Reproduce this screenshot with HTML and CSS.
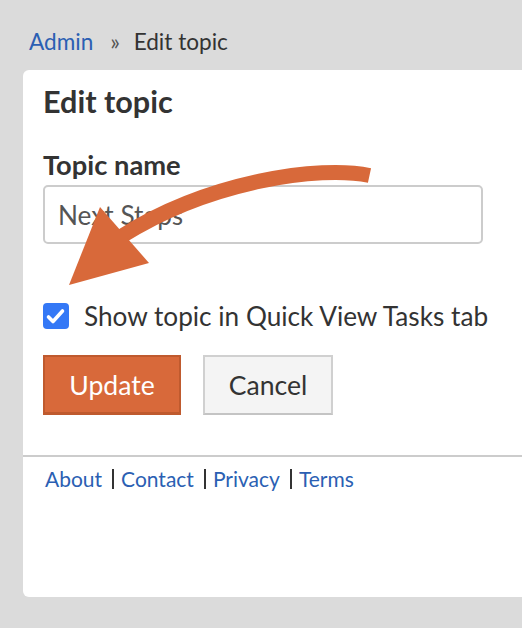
FILE: index.html
```html
<!DOCTYPE html>
<html>
<head>
    <title>Edit topic</title>
    <link rel="stylesheet" href="styles.css">
</head>
<body>
    <div id="page">
        <nav class="breadcrumb">
            <a href="#">Admin</a>
            <span class="sep">&raquo;</span>
            <span class="current">Edit topic</span>
        </nav>

        <div class="card">
            <div class="card-body">
                <h1>Edit topic</h1>

                <form id="edit-topic-form">
                    <label class="field-label" for="topic-name">Topic name</label>
                    <input type="text" id="topic-name" class="text-input" placeholder="Next Steps">

                    <label class="check-row" for="show-quick-view">
                        <input type="checkbox" id="show-quick-view" class="check-input" checked>
                        <span class="check-box">
                            <svg width="26" height="26" viewBox="0 0 26 26">
                                <polyline points="5.5,14 10,18.5 19.5,8" fill="none" stroke="#fff" stroke-width="3.6" stroke-linecap="round" stroke-linejoin="round"/>
                            </svg>
                        </span>
                        Show topic in Quick View Tasks tab
                    </label>

                    <div class="actions">
                        <button type="submit" class="btn btn-primary">Update</button>
                        <button type="button" class="btn btn-default">Cancel</button>
                    </div>
                </form>
            </div>

            <footer class="site-footer">
                <ul>
                    <li><a href="#">About</a></li>
                    <li><a href="#">Contact</a></li>
                    <li><a href="#">Privacy</a></li>
                    <li><a href="#">Terms</a></li>
                </ul>
            </footer>
        </div>

        <!-- callout arrow pointing at the checkbox -->
        <svg class="callout" width="522" height="628" viewBox="0 0 522 628">
            <path d="M369.5,175.5 C320,165 209,181 122,236" fill="none" stroke="#d8693a" stroke-width="15"/>
            <polygon points="69,285 100,207 149,263" fill="#d8693a"/>
        </svg>
    </div>
</body>
</html>
```

FILE: styles.css
```css
html, body {
    margin: 0;
    padding: 0;
}

body {
    font-family: "Lato", "Open Sans", sans-serif;
    background-color: #dbdbdb;
    color: #333;
    overflow: hidden;
}

#page {
    position: relative;
    height: 628px;
}

a {
    color: #2b5fb3;
    text-decoration: none;
}

.breadcrumb {
    padding: 24px 29px 0;
    font-size: 22.6px;
    line-height: 36px;
}

.breadcrumb .sep {
    color: #555;
    margin: 0 8px 0 11px;
}

.card {
    margin: 10px 0 0 23px;
    width: 520px;
    min-height: 527px;
    box-sizing: border-box;
    background-color: #fff;
    border-radius: 6px;
    padding-top: 12px;
}

.card-body {
    padding: 0 20px;
}

h1 {
    margin: 0;
    font-size: 30.6px;
    line-height: 40px;
    font-weight: bold;
}

.field-label {
    display: block;
    margin-top: 26px;
    font-size: 27.3px;
    line-height: 34px;
    font-weight: bold;
}

.text-input {
    display: block;
    box-sizing: border-box;
    margin-top: 3px;
    width: 440px;
    height: 59px;
    padding: 0 13px;
    border: 2px solid #ccc;
    border-radius: 5px;
    font-family: inherit;
    font-size: 26.2px;
    color: #333;
}

.text-input::placeholder {
    color: #555;
}

.check-row {
    display: flex;
    align-items: center;
    gap: 15px;
    margin-top: 54px;
    height: 36px;
    font-size: 26.2px;
}

.check-input {
    display: none;
}

.check-box {
    width: 26px;
    height: 26px;
    border-radius: 4px;
    background-color: #3478f6;
    display: flex;
}

.actions {
    display: flex;
    gap: 22px;
    margin-top: 21px;
}

.btn {
    height: 60px;
    box-sizing: border-box;
    font-family: inherit;
    font-size: 26.6px;
    border-radius: 0;
    cursor: pointer;
}

.btn-primary {
    width: 138px;
    background-color: #d8693a;
    color: #fff;
    border: 2px solid #bf5a2e;
    border-bottom-width: 3px;
}

.btn-default {
    width: 130px;
    background-color: #f4f4f4;
    color: #333;
    border: 2px solid #d0d0d0;
    border-bottom-color: #c4c4c4;
}

.site-footer {
    margin-top: 40px;
    border-top: 2px solid #ccc;
    padding: 12px 22px 0;
}

.site-footer ul {
    list-style: none;
    margin: 0;
    padding: 0;
    display: flex;
    font-size: 21px;
}

.site-footer li {
    line-height: 20px;
}

.site-footer li + li {
    border-left: 2px solid #333;
    margin-left: 10px;
    padding-left: 7px;
}

.callout {
    position: absolute;
    top: 0;
    left: 0;
    pointer-events: none;
}
```
